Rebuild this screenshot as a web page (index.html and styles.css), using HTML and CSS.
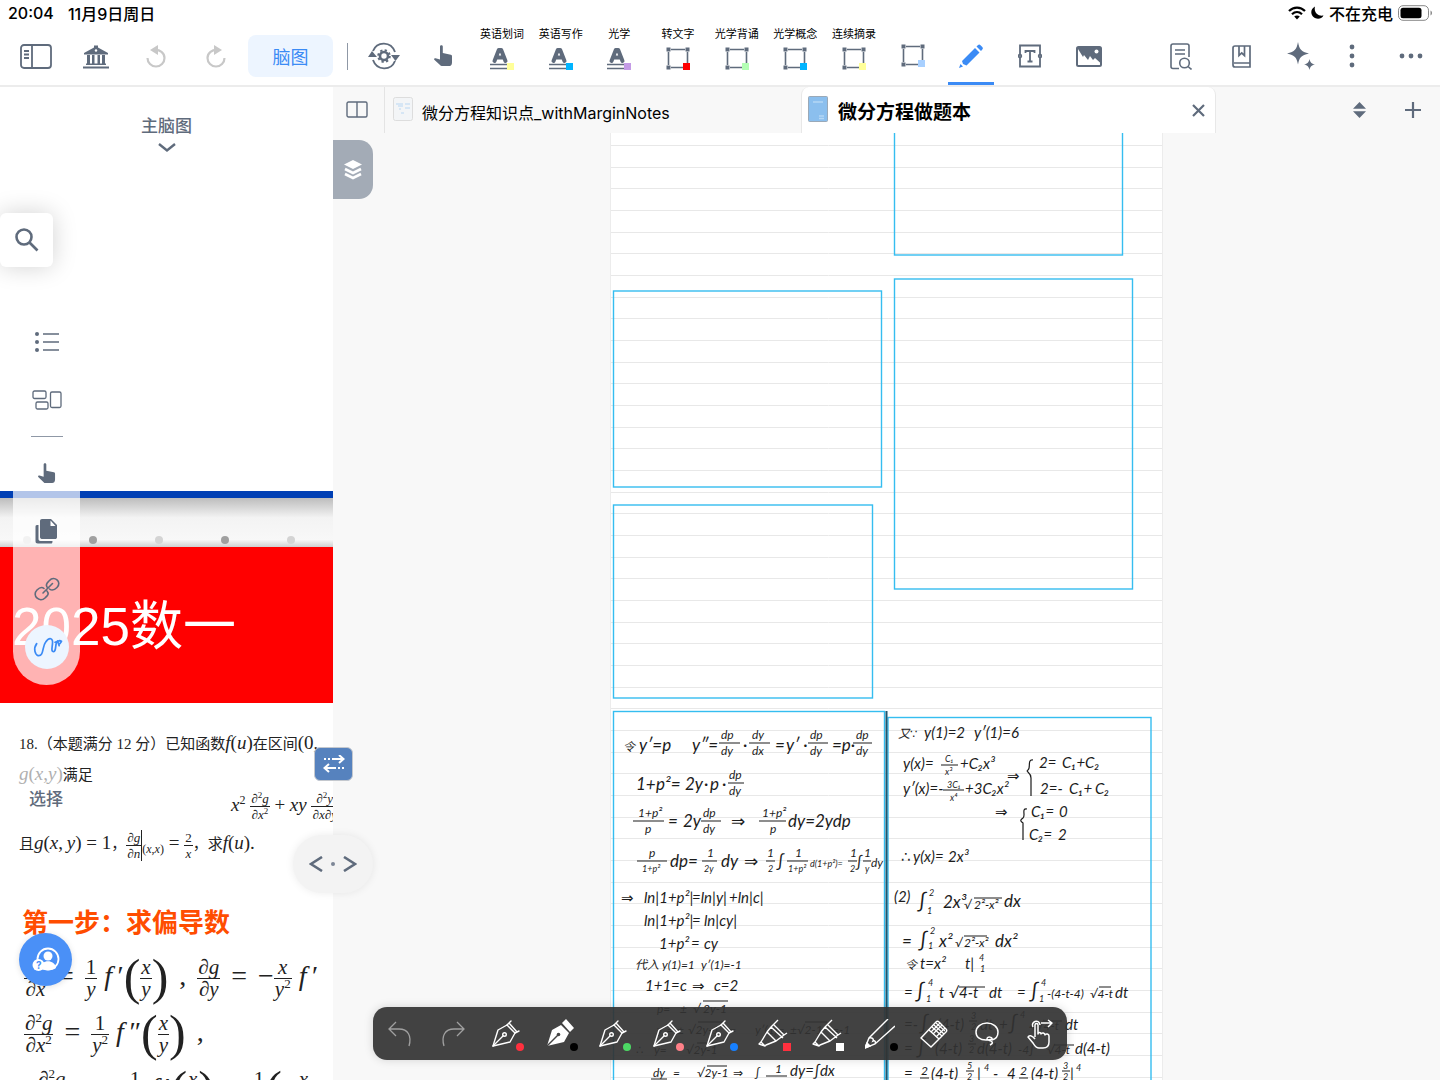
FILE: index.html
```html
<!DOCTYPE html>
<html lang="zh-CN">
<head>
    <meta charset="utf-8">
    <meta name="viewport" content="width=device-width, initial-scale=1.0">
    <title>微分方程做题本</title>
    <link rel="stylesheet" href="styles.css">
</head>
<body>
    <!-- shared icons -->
    <svg class="defs" aria-hidden="true">
        <symbol id="hand" viewBox="0 0 20 22"><path d="M7 1.5c0-1.6 2.8-1.6 2.8 0V8l8 1.8c.9.2 1.2.8 1.2 1.6v6c0 2.6-1.4 3.6-3 3.6H8.800c-.8 0-1.300-.3-1.800-.9L1.300 14.800c-.6-.8.2-1.900 1.300-1.600l4.400 1.300z"/></symbol>
        <symbol id="mark" viewBox="0 0 24 24"><path d="M4.500 14 8.800 3h2.400l4.300 11M6.500 10.500h7" fill="none" stroke="currentColor" stroke-width="4" stroke-linejoin="round" stroke-linecap="round"/><path d="M0 17.500h17M0 21.500h17" stroke="currentColor" stroke-width="1.600"/></symbol>
        <symbol id="box" viewBox="0 0 24 24"><path d="M5 2.500h14M5 20.500h13M2.500 5v13M21.500 5v11" stroke="currentColor" stroke-width="1.600"/><path d="M.5.5h4v4h-4zM19.500.5h4v4h-4zM.5 18.500h4v4h-4z"/></symbol>
        <symbol id="pen" viewBox="0 0 30 30"><g fill="none" stroke="currentColor" stroke-width="1.400" stroke-linejoin="round" stroke-linecap="round"><path d="M2 27 7 11l9-5 8 8-5 9z"/><path d="m2 27 10-10M16 6l4-4M24 14l4-2M18 4l8 9"/><circle cx="13.500" cy="15.500" r="1.800"/></g></symbol>
        <symbol id="marker" viewBox="0 0 30 30"><path d="m3 23 6-10 9 9-10 4-1 1-6-2zM9 13l4-5M18 22l8-6 3-2M13 8l12 11M16 6l10 10M13 8 20 1M3 23l4 4" fill="none" stroke="currentColor" stroke-width="1.400" stroke-linejoin="round"/></symbol>
    </svg>

    <div id="statusbar">
        <span>20:04</span>
        <span>11月9日周日</span>
        <div class="status-right">
            <svg width="18" height="14" viewBox="0 0 18 14" fill="none" stroke="#000" stroke-width="2.200"><path d="M1 5c4.500-4.600 11.500-4.600 16 0M4 8.300c3-2.900 7-2.900 10 0"/><path d="M6.200 10.600c1.600-1.500 4-1.500 5.600 0L9 13.500z" fill="#000" stroke="none"/></svg>
            <svg width="13" height="13" viewBox="0 0 13 13"><path d="M4 .5C-.5 3-.8 8 2.500 11c3 2.600 8 2.200 10-1.500C7 10.500 2.500 6.500 4 .5z"/></svg>
            <span>不在充电</span>
            <svg width="35" height="16" viewBox="0 0 35 16"><rect x=".5" y=".7" width="30" height="14.600" rx="4.500" fill="none" stroke="#888"/><rect x="2.500" y="2.700" width="21" height="10.600" rx="2.500"/><path d="M32.500 5.500c2 .8 2 4.200 0 5z" fill="#888"/></svg>
        </div>
    </div>

    <header id="toolbar">
        <button class="tool" aria-label="侧栏"><svg width="32" height="25" viewBox="0 0 32 25" fill="none" stroke="currentColor" stroke-width="1.800"><rect x="1" y="1" width="30" height="23" rx="3"/><path d="M12 1v23M4 7h5M4 10.500h5M4 14h5" /></svg></button>
        <button class="tool" aria-label="书库"><svg width="26" height="25" viewBox="0 0 26 25"><path d="M1 9 11 3.500V1.500h4v2L25 9v1.500H1zM4 11h3v9H4zM9 11h2.500v9H9zM14.500 11H17v9h-2.500zM19 11h3v9h-3zM3 19.500h20v1.500H3zM0 22.500h26v2H0z"/><circle cx="13" cy="6.500" r="1.200" fill="#fff"/></svg></button>
        <button class="tool off" aria-label="撤销"><svg width="20" height="24" viewBox="0 0 20 24"><path d="M8 6c6-.8 10.500 3 10.500 8 0 4.500-3.800 8.500-8.500 8.500S1.500 18.500 1.500 14" fill="none" stroke="currentColor" stroke-width="2.200"/><path d="M12 1v10L4 6z"/></svg></button>
        <button class="tool off" aria-label="重做"><svg width="20" height="24" viewBox="0 0 20 24"><path d="M12 6C6 5.200 1.500 9 1.500 14c0 4.500 3.800 8.500 8.500 8.500s8.500-4 8.500-8.500" fill="none" stroke="currentColor" stroke-width="2.200"/><path d="M8 1v10l8-5z"/></svg></button>
        <button class="mode">脑图</button>
        <span class="divider"></span>
        <button class="tool" aria-label="同步设置"><svg width="32" height="28" viewBox="0 0 32 28"><path d="M5 9C9-1 23-1 27 10M27 19C23 29 9 29 5 18" fill="none" stroke="currentColor" stroke-width="1.900"/><path d="M0 15l4-6 5 6zM23 13h9l-4.500 6z"/><circle cx="16" cy="14" r="4" fill="none" stroke="currentColor" stroke-width="2.600"/><circle cx="16" cy="14" r="5.800" fill="none" stroke="currentColor" stroke-width="2" stroke-dasharray="2.300 2.250"/></svg></button>
        <div class="tools">
            <button aria-label="手势"><svg width="20" height="22"><use href="#hand"/></svg></button>
            <button><span>英语划词</span><i class="ic c-yellow"><svg width="24" height="24"><use href="#mark"/></svg></i></button>
            <button><span>英语写作</span><i class="ic c-blue"><svg width="24" height="24"><use href="#mark"/></svg></i></button>
            <button><span>光学</span><i class="ic c-purple"><svg width="24" height="24"><use href="#mark"/></svg></i></button>
            <button><span>转文字</span><i class="ic c-red"><svg width="24" height="24"><use href="#box"/></svg></i></button>
            <button><span>光学背诵</span><i class="ic c-green"><svg width="24" height="24"><use href="#box"/></svg></i></button>
            <button><span>光学概念</span><i class="ic c-blue"><svg width="24" height="24"><use href="#box"/></svg></i></button>
            <button><span>连续摘录</span><i class="ic c-yellow"><svg width="24" height="24"><use href="#box"/></svg></i></button>
            <button aria-label="框选"><i class="ic c-sky"><svg width="24" height="24"><use href="#box"/></svg></i></button>
            <button class="active" aria-label="手写"><svg width="24" height="24" viewBox="0 0 24 24"><path d="m0 24 1.500-4 2.500 2.500zM3 17 16 4l4.500 4.500L7.500 21.500 4 20zM17.500 2.500l1.300-1.300c1-1 1.800-1 2.700 0l1.800 1.800c.8.9.8 1.700 0 2.500L22 7z"/></svg></button>
            <button aria-label="文本框"><svg width="24" height="24" viewBox="0 0 24 24" fill="none" stroke="currentColor" stroke-width="1.800"><path d="M2 10V1.500h20V10M2 14v8.500h20V14M7.500 9V7h9v2M12 7v10M9.500 17.500h5"/><circle cx="2" cy="12" r="1.300"/><circle cx="22" cy="12" r="1.300"/></svg></button>
            <button aria-label="图片"><svg width="26" height="21" viewBox="0 0 26 21"><rect x="1" y="1" width="24" height="19" rx="1.500" fill="none" stroke="currentColor" stroke-width="2"/><path d="m2 3 5 8 1-2 4 5 2-4 3 4 2-2 6 5.500V1H2z"/><circle cx="20.500" cy="5.500" r="2" fill="#fff"/></svg></button>
        </div>
        <div class="actions">
            <button class="tool" aria-label="查找"><svg width="22" height="27" viewBox="0 0 22 27" fill="none" stroke="currentColor" stroke-width="1.600"><path d="M9 25.500H3c-1.300 0-2-.8-2-2V3c0-1.300.8-2 2-2h14c1.200 0 2 .8 2 2v11M5 7h10M5 11h10"/><circle cx="14.500" cy="20" r="4.800"/><path d="m18 23.500 3.500 3"/></svg></button>
            <button class="tool" aria-label="书签"><svg width="19" height="23" viewBox="0 0 19 23" fill="none" stroke="currentColor" stroke-width="1.700"><path d="M18 18V1H3C1.700 1 1 1.800 1 3v17c0 1.200.8 2 2 2h15v-4H2M7 1v9.500L9.700 8l2.800 2.500V1"/></svg></button>
            <button class="tool" aria-label="AI"><svg width="28" height="28" viewBox="0 0 28 28"><path d="M11 0c1.500 7.500 3 9.500 11 11.500-8 2-9.500 3.500-11 11-1.500-7.500-3-9-11-11C8 9.500 9.500 7.500 11 0zM22.500 17c.8 3.600 1.800 4.600 5.500 5.500-3.700.9-4.700 1.900-5.500 5.500-.8-3.600-1.800-4.600-5.500-5.500 3.700-.9 4.700-1.900 5.500-5.500z"/></svg></button>
            <button class="tool narrow" aria-label="菜单"><svg width="6" height="24" viewBox="0 0 6 24"><circle cx="3" cy="3" r="2.400"/><circle cx="3" cy="12" r="2.400"/><circle cx="3" cy="21" r="2.400"/></svg></button>
            <button class="tool" aria-label="更多"><svg width="24" height="6" viewBox="0 0 24 6"><circle cx="3" cy="3" r="2.400"/><circle cx="12" cy="3" r="2.400"/><circle cx="21" cy="3" r="2.400"/></svg></button>
        </div>
    </header>

    <main>
        <section id="mindmap">
            <button class="map-title">主脑图<svg width="18" height="10" viewBox="0 0 18 10" fill="none" stroke="currentColor" stroke-width="2.400"><path d="m1 1 8 6.500L17 1"/></svg></button>
            <article class="node">
                <div class="strip"></div>
                <div class="dots"><i></i><i></i><i></i><i></i><i></i></div>
                <h1>2025数一</h1>
                <div class="question">
                    <p>18.（本题满分 12 分）已知函数<span class="math"><em>f</em>(<em>u</em>)</span>在区间<span class="math">(0,</span></p>
                    <p><span class="math faded"><em>g</em>(<em>x</em>,<em>y</em>)</span>满足</p>
                    <p class="formula"><em>x</em><sup>2</sup> <span class="frac"><b>∂<sup>2</sup><em>g</em></b><b>∂<em>x</em><sup>2</sup></b></span> + <em>xy</em> <span class="frac"><b>∂<sup>2</sup><em>y</em></b><b>∂<em>x</em>∂<em>y</em></b></span></p>
                    <p>且<span class="math"><em>g</em>(<em>x</em>,&thinsp;<em>y</em>) = 1</span>，<span class="frac bar"><b>∂<em>g</em></b><b>∂<em>n</em></b></span><sub>(<em>x</em>,<em>x</em>)</sub><span class="math">&nbsp;= </span><span class="frac"><b>2</b><b><em>x</em></b></span>，求<span class="math"><em>f</em>(<em>u</em>).</span></p>
                </div>
                <h2>第一步：求偏导数</h2>
                <div class="steps">
                    <p><span class="frac"><b>∂<em>g</em></b><b>∂<em>x</em></b></span><span class="op">=</span><span class="frac"><b>1</b><b><em>y</em></b></span> <em>f</em>&thinsp;′<span class="paren">(</span><span class="frac"><b><em>x</em></b><b><em>y</em></b></span><span class="paren">)</span><span class="op">,</span><span class="frac"><b>∂<em>g</em></b><b>∂<em>y</em></b></span><span class="op">=</span>−<span class="frac"><b><em>x</em></b><b><em>y</em><sup>2</sup></b></span> <em>f</em>&thinsp;′</p>
                    <p><span class="frac"><b>∂<sup>2</sup><em>g</em></b><b>∂<em>x</em><sup>2</sup></b></span><span class="op">=</span><span class="frac"><b>1</b><b><em>y</em><sup>2</sup></b></span> <em>f</em>&thinsp;″<span class="paren">(</span><span class="frac"><b><em>x</em></b><b><em>y</em></b></span><span class="paren">)</span><span class="op">,</span></p>
                    <p>&nbsp;<span class="frac"><b>∂<sup>2</sup><em>g</em></b><b>∂<em>x</em>∂<em>y</em></b></span><span class="op">=</span>−<span class="frac"><b>1</b><b><em>y</em><sup>2</sup></b></span> <em>f</em>&thinsp;′<span class="paren">(</span><span class="frac"><b><em>x</em></b><b><em>y</em></b></span><span class="paren">)</span><span class="op">−</span><span class="frac"><b>1</b><b><em>y</em></b></span><span class="paren">(</span>−<span class="frac"><b><em>x</em></b><b><em>y</em></b></span></p>
                </div>
            </article>

            <button class="search" aria-label="搜索"><svg width="24" height="24" viewBox="0 0 24 24" fill="none" stroke="currentColor" stroke-width="2.600"><circle cx="9" cy="9" r="7.500"/><path d="m14.500 14.500 8 8"/></svg></button>
            <nav class="rail">
                <button aria-label="大纲"><svg width="24" height="20" viewBox="0 0 24 20"><path d="M8 2h16M8 10h16M8 18h16" stroke="currentColor" stroke-width="1.600"/><circle cx="2" cy="2" r="2"/><circle cx="2" cy="10" r="2"/><circle cx="2" cy="18" r="2"/></svg></button>
                <button aria-label="卡片"><svg width="30" height="20" viewBox="0 0 30 20" fill="none" stroke="currentColor" stroke-width="1.300"><rect x="1" y="1" width="13" height="7.500" rx="1.500"/><rect x="4" y="12" width="12" height="7" rx="1.500"/><rect x="18.500" y="2" width="10.500" height="15.500" rx="1.500"/></svg></button>
                <hr>
                <button aria-label="选择"><svg width="19" height="21"><use href="#hand"/></svg></button>
                <button aria-label="复制"><svg width="23" height="25" viewBox="0 0 23 25"><path d="M7 0h9l6 6v12c0 1.500-.8 2-2 2H7.500C6 20 5 19.500 5 18V2c0-1.300.8-2 2-2z"/><path d="M15.500 1.500v5.500h5z" fill="#fff"/><path d="M3.500 6H2C.8 6 .5 6.700.5 8v14c0 1.800.7 2.500 2.500 2.500h13c1 0 1.500-.6 1.500-2.500H5.500c-1.300 0-2-.8-2-2z"/></svg></button>
                <button aria-label="链接"><svg width="26" height="26" viewBox="0 0 26 26" fill="none" stroke="currentColor" stroke-width="1.600" stroke-linecap="round"><path d="M9 17 18.500 7.500M13 11c-2-3 .5-4.500 2.500-6.500C20-1 28.500 6 23 11.500c-2.500 2.500-5 3.500-7.500 1.500M13 15c2.500 3 .5 4.500-2 7C5.500 27-2.500 19.500 3 14c2.500-2.500 4.500-3.800 7-1.500"/></svg></button>
                <button class="current" aria-label="手写"><svg width="26" height="25" viewBox="0 0 26 25" fill="none" stroke="currentColor" stroke-width="1.700" stroke-linecap="round" stroke-linejoin="round"><path d="M2 12c-2 6 2 11 5 11 6-1 1-10 3-15 2-7 6-6 7-1 1 4 1 9 4 7 2-2-2-8 0-11l3 4M19 5l4-3 2 0-1 3"/></svg></button>
            </nav>
            <span class="tip">选择</span>
            <button class="help" aria-label="帮助"><svg width="28" height="26" viewBox="0 0 28 26"><circle cx="16" cy="12" r="10.500" fill="none" stroke="#fff" stroke-width="1.800"/><circle cx="16" cy="9" r="4.500" fill="#fff"/><path d="M8 21c1-9 15-9 16 0-4 3-12 3-16 0z" fill="#fff"/><circle cx="6.500" cy="18" r="6" fill="#fff"/><text x="4" y="22">?</text></svg></button>
        </section>

        <section id="reader">
            <div class="tabs">
                <button class="split" aria-label="分屏"><svg width="22" height="17" viewBox="0 0 22 17" fill="none" stroke="currentColor" stroke-width="1.400"><rect x="1" y="1" width="20" height="15" rx="1.500"/><path d="M11 1v15"/></svg></button>
                <div class="tab"><svg class="thumb" width="20" height="24" viewBox="0 0 20 24"><rect x=".5" y=".5" width="19" height="23" rx="2" fill="#f3f5f7" stroke="#ddd"/><path d="M3 7h7M5 9h5M12 7h5M6 12h2M12 11h5M8 16h3" stroke="#cde1f5" stroke-width="1.400"/></svg><a href="#">微分方程知识点_withMarginNotes</a></div>
                <div class="tab open"><svg class="thumb" width="20" height="26" viewBox="0 0 20 26"><rect x=".5" y=".5" width="19" height="25" rx="1" fill="#8bbfee" stroke="#9aa9b8"/><path d="M5 6h10M11 20h5M11 22.500h5" stroke="#b5d7f5" stroke-width="1.400"/></svg><a href="#">微分方程做题本</a><button aria-label="关闭"><svg width="13" height="13" viewBox="0 0 13 13" stroke="currentColor" stroke-width="2.200"><path d="m1 1 11 11M12 1 1 12"/></svg></button></div>
                <div class="tab-tools">
                    <button aria-label="排序"><svg width="13" height="16" viewBox="0 0 13 16"><path d="M6.500 0 13 6.700H0zM6.500 16 0 9.300h13z"/></svg></button>
                    <button aria-label="新建"><svg width="16" height="16" viewBox="0 0 16 16" stroke="currentColor" stroke-width="2.200"><path d="M8 0v16M0 8h16"/></svg></button>
                </div>
            </div>
            <div class="page">
                <svg class="sheet" width="553" height="947" viewBox="611 133 553 947">
                    <defs>
                        <pattern id="rules" x="0" y="275" width="553" height="65" patternUnits="userSpaceOnUse">
                            <path d="M0 .5h553M0 22.500h553M0 43.500h553" stroke="#e8e8e8"/>
                        </pattern>
                    </defs>
                    <rect x="611" y="133" width="553" height="947" fill="url(#rules)"/>
                    <path d="M611.500 133v947M1163.500 133v947" stroke="#ececec"/>
                    <g class="frames">
                        <rect x="895.500" y="100" width="228" height="155"/>
                        <rect x="895.500" y="279" width="238" height="310"/>
                        <rect x="614.500" y="291" width="268" height="196"/>
                        <rect x="614.500" y="505" width="259" height="193"/>
                        <rect x="614.500" y="711.500" width="271" height="400"/>
                        <rect x="889" y="717.500" width="263" height="400"/>
                    </g>
                    <path d="M887.500 711v369" stroke="#20566d" stroke-width="2"/>

                    <!-- handwriting, left column -->
                    <g class="ink">
                        <text y="751"><tspan class="m" x="624">令</tspan><tspan x="640">y′=p</tspan><tspan x="693">y″=</tspan><tspan x="744">·</tspan><tspan x="776">=</tspan><tspan x="787">y′ ·</tspan><tspan x="833">=p·</tspan></text>
                        <text class="m" y="739"><tspan x="722">dp</tspan><tspan x="753">dy</tspan><tspan x="811">dp</tspan><tspan x="857">dp</tspan></text>
                        <text class="m" y="755"><tspan x="722">dy</tspan><tspan x="753">dx</tspan><tspan x="811">dy</tspan><tspan x="857">dy</tspan></text>
                        <text y="790"><tspan x="637">1+</tspan><tspan x="657">p²=</tspan><tspan x="686">2y</tspan><tspan x="705">·</tspan><tspan x="711">p</tspan><tspan x="723">·</tspan></text>
                        <text class="m" x="730" y="779">dp</text><text class="m" x="730" y="795">dy</text>
                        <text y="827"><tspan x="669">=</tspan><tspan x="684">2y</tspan><tspan x="732">⇒</tspan><tspan x="789">dy=2ydp</tspan></text>
                        <text class="m" y="817"><tspan x="639">1+p²</tspan><tspan x="704">dp</tspan><tspan x="763">1+p²</tspan></text>
                        <text class="m" y="833"><tspan x="646">p</tspan><tspan x="704">dy</tspan><tspan x="771">p</tspan></text>
                        <text y="867"><tspan x="671">dp=</tspan><tspan x="722">dy</tspan><tspan x="745">⇒</tspan><tspan x="778">∫</tspan><tspan class="s" x="811">d(1+p²)=</tspan><tspan class="n" x="857">∫</tspan><tspan class="m" x="872">dy</tspan></text>
                        <text class="m" y="857"><tspan x="650">p</tspan><tspan x="708">1</tspan><tspan x="768">1</tspan><tspan x="796">1</tspan><tspan x="851">1</tspan><tspan x="865">1</tspan></text>
                        <text class="s" y="872"><tspan x="643">1+p²</tspan><tspan x="705">2y</tspan><tspan x="769">2</tspan><tspan x="789">1+p²</tspan><tspan x="851">2</tspan><tspan x="866">y</tspan></text>
                        <text class="n" y="903"><tspan x="622">⇒</tspan><tspan x="645">ln|1+p²|</tspan><tspan x="693">=ln|y|</tspan><tspan x="730">+ln|c|</tspan></text>
                        <text class="n" y="926"><tspan x="645">ln|1+p²|</tspan><tspan x="693">=</tspan><tspan x="705">ln|cy|</tspan></text>
                        <text class="n" y="949"><tspan x="660">1+p²</tspan><tspan x="692">=</tspan><tspan x="705">cy</tspan></text>
                        <text class="m" y="969"><tspan x="636">代入</tspan><tspan x="663">y(1)=1</tspan><tspan x="702">y′(1)=-1</tspan></text>
                        <text class="n" y="991"><tspan x="646">1+1=</tspan><tspan x="681">c</tspan><tspan x="693">⇒</tspan><tspan x="715">c=2</tspan></text>
                        <text class="m" y="1013"><tspan x="658">p=</tspan><tspan x="681">±</tspan><tspan x="694">√</tspan><tspan x="704">2y-1</tspan></text>
                        <text class="m" y="1034"><tspan x="658">y′=</tspan><tspan x="678">±</tspan><tspan x="689">√2y-1</tspan><tspan x="727">⇐</tspan><tspan x="756">y′(1)=</tspan><tspan x="791">±√2-1</tspan><tspan x="833">=-1</tspan></text>
                        <text class="m" y="1054"><tspan x="637">∴</tspan><tspan x="655">y=</tspan><tspan x="687">√2y-1</tspan></text>
                        <text class="m" y="1077"><tspan x="654">dy</tspan><tspan x="674">=</tspan><tspan x="698">√2y-1</tspan><tspan x="734">⇒</tspan><tspan x="756">∫</tspan><tspan x="776" dy="-4">1</tspan><tspan class="n" x="791" dy="3">dy=∫dx</tspan></text>
                        <path d="M720 743h21M750 743h21M809 743h20M854 743h19M729 783h16M634 821h31M702 821h20M760 821h27M638 861h30M703 861h15M767 861h9M788 861h21M849 861h9M864 861h8M704 1001h25M699 1022h25M806 1022h22M698 1043h23M708 1066h20M767 1076h21M652 1079h16"/>
                    </g>

                    <!-- handwriting, right column -->
                    <g class="ink">
                        <text y="738"><tspan class="m" x="899">又∵</tspan><tspan class="n" x="925">y(1)=2</tspan><tspan class="n" x="975">y′(1)=6</tspan></text>
                        <text class="n" y="769"><tspan x="904">y(x)=</tspan><tspan x="961">+C₂x³</tspan><tspan x="1008" dy="12">⇒</tspan></text>
                        <text class="n" y="794"><tspan x="904">y′(x)=-</tspan><tspan x="966">+3C₂x²</tspan></text>
                        <text class="s"><tspan x="946" y="762">C₁</tspan><tspan x="946" y="775">x³</tspan><tspan x="948" y="788">3C₁</tspan><tspan x="951" y="801">x⁴</tspan></text>
                        <text class="n" y="768"><tspan x="1040">2=</tspan><tspan x="1063">C₁+C₂</tspan></text>
                        <text class="n" y="794"><tspan x="1041">2=-</tspan><tspan x="1070">C₁+</tspan><tspan x="1096">C₂</tspan></text>
                        <text class="n" y="817"><tspan x="996">⇒</tspan><tspan x="1032">C₁=</tspan><tspan x="1060">0</tspan></text>
                        <text class="n" y="840"><tspan x="1030">C₂=</tspan><tspan x="1059">2</tspan></text>
                        <text class="n" y="862"><tspan x="902">∴</tspan><tspan x="914">y(x)=</tspan><tspan x="949">2x³</tspan></text>
                        <text y="902"><tspan class="n" x="895">(2)</tspan><tspan class="l" x="919" dy="6">∫</tspan><tspan x="944">2x³</tspan><tspan x="1005" dy="-1">dx</tspan></text>
                        <text class="m" y="909"><tspan x="965">√</tspan><tspan x="975">2²-x²</tspan></text>
                        <text y="947"><tspan x="903">=</tspan><tspan class="l" x="920">∫</tspan><tspan x="940">x²</tspan><tspan x="996">dx²</tspan></text>
                        <text class="m" y="947"><tspan x="956">√</tspan><tspan x="965">2²-x²</tspan></text>
                        <text class="n" y="969"><tspan class="m" x="906">令</tspan><tspan x="921">t=x²</tspan><tspan x="966">t|</tspan></text>
                        <text class="n" y="998"><tspan x="905">=</tspan><tspan class="l" x="917">∫</tspan><tspan x="940">t</tspan><tspan x="950">√</tspan><tspan x="960">4-t</tspan><tspan x="990">dt</tspan><tspan x="1018">=</tspan><tspan class="l" x="1031">∫</tspan><tspan class="m" x="1048">-(4-t-4)</tspan><tspan class="m" x="1091">√4-t</tspan><tspan x="1116">dt</tspan></text>
                        <text class="n" y="1030"><tspan x="905">=-</tspan><tspan class="l" x="921">∫</tspan><tspan x="938">(4-t)</tspan><tspan x="981">dt</tspan><tspan x="1000">+</tspan><tspan class="l" x="1010">∫</tspan><tspan class="m" x="1030">4√4-t</tspan><tspan x="1066">dt</tspan></text>
                        <text class="n" y="1054"><tspan x="905">=</tspan><tspan class="l" x="918">∫</tspan><tspan x="936">(4-t)</tspan><tspan x="978">d(4-t)</tspan><tspan class="m" x="1019">-4∫</tspan><tspan class="m" x="1048">√4-t</tspan><tspan x="1076">d(4-t)</tspan></text>
                        <text class="n" y="1079"><tspan x="905">=</tspan><tspan x="932">(4-t)</tspan><tspan x="978">|</tspan><tspan x="994">-</tspan><tspan x="1008">4</tspan><tspan x="1032">(4-t)</tspan><tspan x="1071">|</tspan></text>
                        <text class="s"><tspan x="930" y="896">2</tspan><tspan x="928" y="914">1</tspan><tspan x="931" y="934">2</tspan><tspan x="929" y="949">1</tspan><tspan x="980" y="961">4</tspan><tspan x="981" y="972">1</tspan><tspan x="929" y="986">4</tspan><tspan x="927" y="1002">1</tspan><tspan x="1042" y="986">4</tspan><tspan x="1040" y="1002">1</tspan><tspan x="972" y="1019">3</tspan><tspan x="972" y="1030">2</tspan><tspan x="1021" y="1018">4</tspan><tspan x="970" y="1042">3</tspan><tspan x="970" y="1053">2</tspan><tspan x="968" y="1069">5</tspan><tspan x="968" y="1080">2</tspan><tspan x="985" y="1071">4</tspan><tspan x="1064" y="1069">3</tspan><tspan x="1064" y="1080">2</tspan><tspan x="1077" y="1071">4</tspan></text>
                        <text class="m"><tspan x="922" y="1075">2</tspan><tspan x="1021" y="1075">2</tspan></text>
                        <path d="M942 765h17M944 790h21M975 898h28M965 936h23M960 987h26M1100 987h12M1045 1021h18M1055 1045h20M921 1078h9M1020 1078h9M1034 760c-6-1-2 8-5 10-3 2 3 2 3 8v18M1028 809c-6-1-1 7-4 9s-3 3 0 5v17M970 1021h8M969 1044h8M967 1071h8M1063 1071h8"/>
                    </g>
                </svg>
            </div>
            <button class="layers" aria-label="图层"><svg width="18" height="20" viewBox="0 0 18 20"><path d="m9 0 9 4.500L9 9 0 4.500z"/><path d="m1 9 8 4 8-4M1 14l8 4 8-4" fill="none" stroke="currentColor" stroke-width="2.600"/></svg></button>
            <button class="swap" aria-label="切换"><svg width="22" height="18" viewBox="0 0 22 18" fill="none" stroke="currentColor" stroke-width="2"><path d="M9 4h11M16 0l4.500 4L16 8M1 4h2M5 4h2M13 13H2M6 9l-4.500 4L6 17M15 13h2M19 13h2"/></svg></button>
            <button class="resize" aria-label="调整宽度"><svg width="48" height="16" viewBox="0 0 48 16" fill="none" stroke="currentColor" stroke-width="2.600"><path d="M13 1 2 8l11 7M35 1l11 7-11 7"/><circle cx="24" cy="8" r="2" fill="#7c8696" stroke="none"/></svg></button>
        </section>
    </main>

    <div id="penbar">
        <button class="dim" aria-label="撤销"><svg width="24" height="26" viewBox="0 0 24 26" fill="none" stroke="currentColor" stroke-width="1.300"><path d="m8 1-7 7 7 7M1 8h10c9 0 13 7 10 17"/></svg></button>
        <button class="dim" aria-label="重做"><svg width="24" height="26" viewBox="0 0 24 26" fill="none" stroke="currentColor" stroke-width="1.300"><path d="m16 1 7 7-7 7M23 8H13C4 8 0 15 3 25"/></svg></button>
        <button class="dot d-red" aria-label="红色钢笔"><svg width="30" height="30"><use href="#pen"/></svg></button>
        <button class="dot d-black" aria-label="黑色钢笔"><svg width="30" height="30" viewBox="0 0 30 30"><path d="M2 27 7 11l9-5 8 8-5 9zM17 4l4-4 8 9-4 4z"/><path d="m2 27 11-11" stroke="#444" stroke-width="1.500"/><circle cx="13.500" cy="15.500" r="1.800" fill="#444"/></svg></button>
        <button class="dot d-green" aria-label="绿色钢笔"><svg width="30" height="30"><use href="#pen"/></svg></button>
        <button class="dot d-pink" aria-label="粉色钢笔"><svg width="30" height="30"><use href="#pen"/></svg></button>
        <button class="dot d-blue" aria-label="蓝色钢笔"><svg width="30" height="30"><use href="#pen"/></svg></button>
        <button class="dot square d-red" aria-label="红色荧光笔"><svg width="30" height="30"><use href="#marker"/></svg></button>
        <button class="dot square d-white" aria-label="白色荧光笔"><svg width="30" height="30"><use href="#marker"/></svg></button>
        <button class="dot d-black" aria-label="铅笔"><svg width="30" height="30" viewBox="0 0 30 30" fill="none" stroke="currentColor" stroke-width="1.400"><path d="M23 0 4 19 0 29l10-4L30 7M4 19c3-1 5 1 4 3 2-1 3 1 2 3"/><path d="m0 29 2-5 3 3z" fill="#fff"/></svg></button>
        <button aria-label="橡皮"><svg width="28" height="28" viewBox="0 0 28 28" fill="none" stroke="currentColor" stroke-width="1.400"><path d="M1 18 16 2c1-1 2-1 3 0l7 7c1 1 1 2 0 3L11 27zM9 10l10 9"/><path d="m12 7 10 9M14 5l10 9M16 3l9 8M13 14 22 5M11 12l9-9M16 17l9-9" stroke-width="1.200"/></svg></button>
        <button aria-label="套索"><svg width="24" height="24" viewBox="0 0 24 24" fill="none" stroke="currentColor" stroke-width="1.500"><path d="M17 18c4-1 6-4 6-8 0-5-5-9-11-9S1 5 1 10s4 8 10 8c2 0 4 0 6-1 1-2-5-3-5 0 0 2 5 1 5 3 1 1 0 2-2 3"/></svg></button>
        <button aria-label="手势"><svg width="28" height="30" viewBox="0 0 28 30" fill="none" stroke="currentColor" stroke-width="1.500" stroke-linejoin="round"><path d="M9 18V6c0-2 3-2 3 0v9c0-2 3-2 3 0 1-2 4-1 4 1 1-2 4-1 4 1v6c0 4-2 6-6 6h-4c-3 0-4-2-6-5l-5-6c1-2 4-2 7 2M7 8c-3-5 6-9 7-2M15 4h10M22 1l4 3-4 4"/></svg></button>
    </div>
</body>
</html>
```

FILE: styles.css
```css
* {
    box-sizing: border-box;
}

body {
    margin: 0;
    height: 100vh;
    display: flex;
    flex-direction: column;
    overflow: hidden;
    position: relative;
    font-family: Inter, "Noto Sans CJK SC", sans-serif;
    color: #000;
    background-color: #fff;
}

button {
    border: 0;
    padding: 0;
    background: none;
    font: inherit;
    color: #5f6b7c;
    display: flex;
    align-items: center;
    justify-content: center;
}

svg {
    fill: currentColor;
    flex: none;
}

svg[fill="none"] {
    fill: none;
}

a {
    color: inherit;
    text-decoration: none;
}

.defs {
    position: absolute;
    width: 0;
    height: 0;
}

/* status bar */
#statusbar {
    height: 27px;
    padding: 0 7px 2px 8px;
    display: flex;
    align-items: center;
    gap: 14px;
    font-size: 16px;
    font-weight: 500;
}

.status-right {
    margin-left: auto;
    display: flex;
    align-items: center;
    gap: 5px;
}

/* toolbar */
#toolbar {
    height: 60px;
    padding-left: 6px;
    border-bottom: 2px solid #ececec;
    display: flex;
    align-items: center;
}

.tool {
    width: 60px;
    height: 58px;
    flex: none;
}

.tool.off {
    color: #c8c8c8;
}

.tool.narrow {
    width: 42px;
    margin-right: 9px;
}

.mode {
    width: 85px;
    height: 42px;
    margin-left: 2px;
    border-radius: 8px;
    background-color: #edf5ff;
    color: #3b8bf5;
    font-size: 18px;
    flex: none;
}

.divider {
    width: 1px;
    height: 27px;
    margin: 0 6px 0 14px;
    background-color: #8f98a6;
}

.tools {
    width: 704px;
    height: 58px;
    display: grid;
    grid-template-columns: repeat(12, 1fr);
}

.tools button {
    position: relative;
    flex-direction: column;
    white-space: nowrap;
}

.tools span {
    color: #000;
    font-size: 11px;
    line-height: 14px;
    margin-bottom: 6px;
}

.tools button:has(span) {
    justify-content: flex-start;
}

.tools .active {
    color: #3b8bf5;
}

.tools .active::after {
    content: "";
    position: absolute;
    bottom: 0;
    width: 46px;
    height: 3px;
    background-color: #3b8bf5;
}

.ic {
    display: block;
    position: relative;
    height: 24px;
}

.ic::after {
    content: "";
    position: absolute;
    right: 0;
    bottom: 1px;
    width: 7px;
    height: 7px;
    background-color: var(--c);
}

.c-yellow { --c: #ffff99; }
.c-blue { --c: #00b4ff; }
.c-purple { --c: #c49be6; }
.c-red { --c: #ff0000; }
.c-green { --c: #b4ffb4; }
.c-sky { --c: #a8d0ff; }

.actions {
    display: flex;
    margin-left: auto;
}

.actions .tool:last-child {
    width: 58px;
}

main {
    flex: 1;
    min-height: 0;
    display: flex;
}

/* mind map */
#mindmap {
    width: 333px;
    flex: none;
    position: relative;
    overflow: hidden;
}

.map-title {
    flex-direction: column;
    gap: 5px;
    margin: 24px auto 0;
    height: 44px;
    font-size: 17px;
    line-height: 24px;
    font-weight: 500;
}

.node {
    margin-top: 336px;
    white-space: nowrap;
}

.strip {
    height: 7px;
    background-color: #003fb4;
}

.dots {
    height: 49px;
    padding: 38px 0 0 23px;
    display: flex;
    gap: 58px;
    background: linear-gradient(#bdbdbd, #f3f3f3 40%, #f8f8f8 85%, #d0d0d0);
}

.dots i {
    width: 8px;
    height: 8px;
    flex: none;
    border-radius: 50%;
    background-color: #d4d4d4;
}

.dots i:nth-child(even) {
    background-color: #a0a0a0;
}

.node h1 {
    margin: 0;
    height: 156px;
    padding-left: 12px;
    background-color: #ff0000;
    color: #fff;
    font: 53px/160px "Liberation Sans", "Noto Sans CJK SC", sans-serif;
}

.question {
    padding: 24px 0 0 19px;
    font-family: "Liberation Serif", "Noto Sans CJK SC", serif;
    font-size: 15px;
    color: #222;
}

.question p {
    margin: 0;
    height: 31px;
    line-height: 31px;
}

.math {
    font-size: 19px;
}

.question .formula {
    padding-left: 212px;
    font-size: 19px;
}

.question p:last-child {
    height: 46px;
    line-height: 46px;
}

.question .faded {
    color: #b0b0b0;
}

sup, sub {
    font-size: 12px;
    line-height: 0;
}

.frac {
    display: inline-flex;
    flex-direction: column;
    vertical-align: middle;
    text-align: center;
    font-size: 13px;
    line-height: 15px;
}

.frac sup {
    font-size: 9px;
}

.frac b {
    font-weight: normal;
    padding: 0 1px;
}

.frac b:first-child {
    border-bottom: 1px solid #222;
}

.frac.bar {
    border-right: 1px solid #222;
}

.node h2 {
    margin: 39px 0 0 22px;
    font-size: 26px;
    line-height: 36px;
    font-weight: 700;
    color: #ff4d00;
}

.steps {
    padding: 7px 0 0 24px;
    font-family: "Liberation Serif", serif;
    font-size: 28px;
    color: #222;
}

.steps p {
    margin: 0;
    height: 56px;
    line-height: 56px;
}

.steps .frac {
    font-size: 21px;
    line-height: 21px;
}

.steps .frac sup {
    font-size: 13px;
}

.op {
    margin: 0 11px;
}

.paren {
    font-size: 50px;
    line-height: 0;
    vertical-align: -9px;
}

.search {
    position: absolute;
    left: 0;
    top: 126px;
    width: 53px;
    height: 54px;
    border-radius: 6px;
    background-color: #fff;
    box-shadow: 0 0 24px rgba(0, 0, 0, .18);
}

.rail {
    position: absolute;
    left: 13px;
    top: 212px;
    width: 67px;
    height: 386px;
    padding-top: 21px;
    display: flex;
    flex-direction: column;
    align-items: center;
    gap: 14px;
    border-radius: 34px;
    background-color: rgba(255, 255, 255, .7);
}

.rail button {
    width: 44px;
    height: 44px;
    flex: none;
}

.rail hr {
    width: 32px;
    height: 1px;
    margin: 0;
    border: 0;
    background-color: #8f98a6;
}

.rail .current {
    border-radius: 50%;
    background-color: #edf5ff;
    color: #3b8bf5;
}

.rail .current svg {
    transform: rotate(18deg);
}

.tip {
    position: absolute;
    left: 29px;
    top: 700px;
    font-size: 17px;
    line-height: 24px;
    font-weight: 500;
    color: #5f6b7c;
}

.help {
    position: absolute;
    left: 19px;
    top: 846px;
    width: 53px;
    height: 53px;
    border-radius: 50%;
    background-color: #4a90f7;
    box-shadow: 0 1px 6px rgba(0, 0, 0, .12);
}

.help text {
    font-size: 10px;
    font-weight: 700;
    fill: #4a90f7;
}

/* reader */
#reader {
    flex: 1;
    min-width: 0;
    display: flex;
    flex-direction: column;
    position: relative;
    background-color: #f8f8f8;
}

.tabs {
    height: 46px;
    flex: none;
    display: flex;
}

.split {
    width: 52px;
    padding: 0 4px 2px 0;
    border-right: 1px solid #e4e4e4;
}

.tab {
    width: 416px;
    padding: 0 10px 0 8px;
    display: flex;
    align-items: center;
    font-size: 16px;
}

.tab .thumb {
    margin-right: 9px;
    align-self: flex-start;
    margin-top: 10px;
}

.tab a {
    line-height: 20px;
    padding-top: 6px;
}

.tab.open {
    width: 415px;
    padding-left: 6px;
    background-color: #fff;
    border: 1px solid #e8e8e8;
    border-width: 0 1px;
    border-radius: 8px 8px 0 0;
    font-size: 19px;
    font-weight: 700;
}

.tab.open .thumb {
    margin-top: 9px;
    margin-right: 10px;
}

.tab button {
    margin-left: auto;
}

.tab-tools {
    margin-left: auto;
    padding-right: 19px;
    display: flex;
    gap: 39px;
}

.page {
    flex: 1;
    min-height: 0;
    overflow: hidden;
    display: flex;
    justify-content: center;
}

.sheet {
    background-color: #fff;
}

.frames rect {
    fill: none;
    stroke: #35bdf0;
    stroke-width: 1.400;
}

.ink {
    font-family: Lato, "DejaVu Sans", "Noto Sans CJK SC", sans-serif;
    font-style: italic;
    font-size: 17px;
    fill: #1c1c1c;
}

.ink path {
    fill: none;
    stroke: #1c1c1c;
    stroke-width: 1.200;
}

.ink .l { font-size: 20px; }
.ink .n { font-size: 15px; }
.ink .m { font-size: 12px; }
.ink .s { font-size: 9px; }

.layers {
    position: absolute;
    left: 0;
    top: 53px;
    width: 40px;
    height: 59px;
    border-radius: 0 14px 14px 0;
    background-color: #a3abb6;
    color: #fff;
}

.swap {
    position: absolute;
    left: -19px;
    top: 660px;
    width: 39px;
    height: 34px;
    border: 1px solid #c4c8ce;
    border-radius: 6px;
    background-color: #5682be;
    color: #fff;
}

.resize {
    position: absolute;
    left: -40px;
    top: 748px;
    width: 80px;
    height: 58px;
    border-radius: 29px;
    background-color: #f3f3f3;
    box-shadow: 0 0 8px rgba(0, 0, 0, .08);
}

/* pen bar */
#penbar {
    position: absolute;
    left: 0;
    right: 0;
    bottom: 20px;
    width: 694px;
    height: 53px;
    margin: 0 auto;
    display: grid;
    grid-template-columns: repeat(13, 1fr);
    border-radius: 14px;
    background-color: rgba(50, 50, 50, .92);
    box-shadow: 0 0 10px rgba(0, 0, 0, .15);
}

#penbar button {
    position: relative;
    color: #fff;
}

#penbar .dim {
    color: #a0a0a0;
}

.dot::after {
    content: "";
    position: absolute;
    right: 9px;
    bottom: 9px;
    width: 8px;
    height: 8px;
    border-radius: 50%;
    background-color: var(--c);
}

.dot.square::after {
    border-radius: 0;
}

.d-red { --c: #ff303e; }
.d-black { --c: #000; }
.d-green { --c: #4cd964; }
.d-pink { --c: #ff8088; }
.d-blue { --c: #1780ff; }
.d-white { --c: #fff; }
```
